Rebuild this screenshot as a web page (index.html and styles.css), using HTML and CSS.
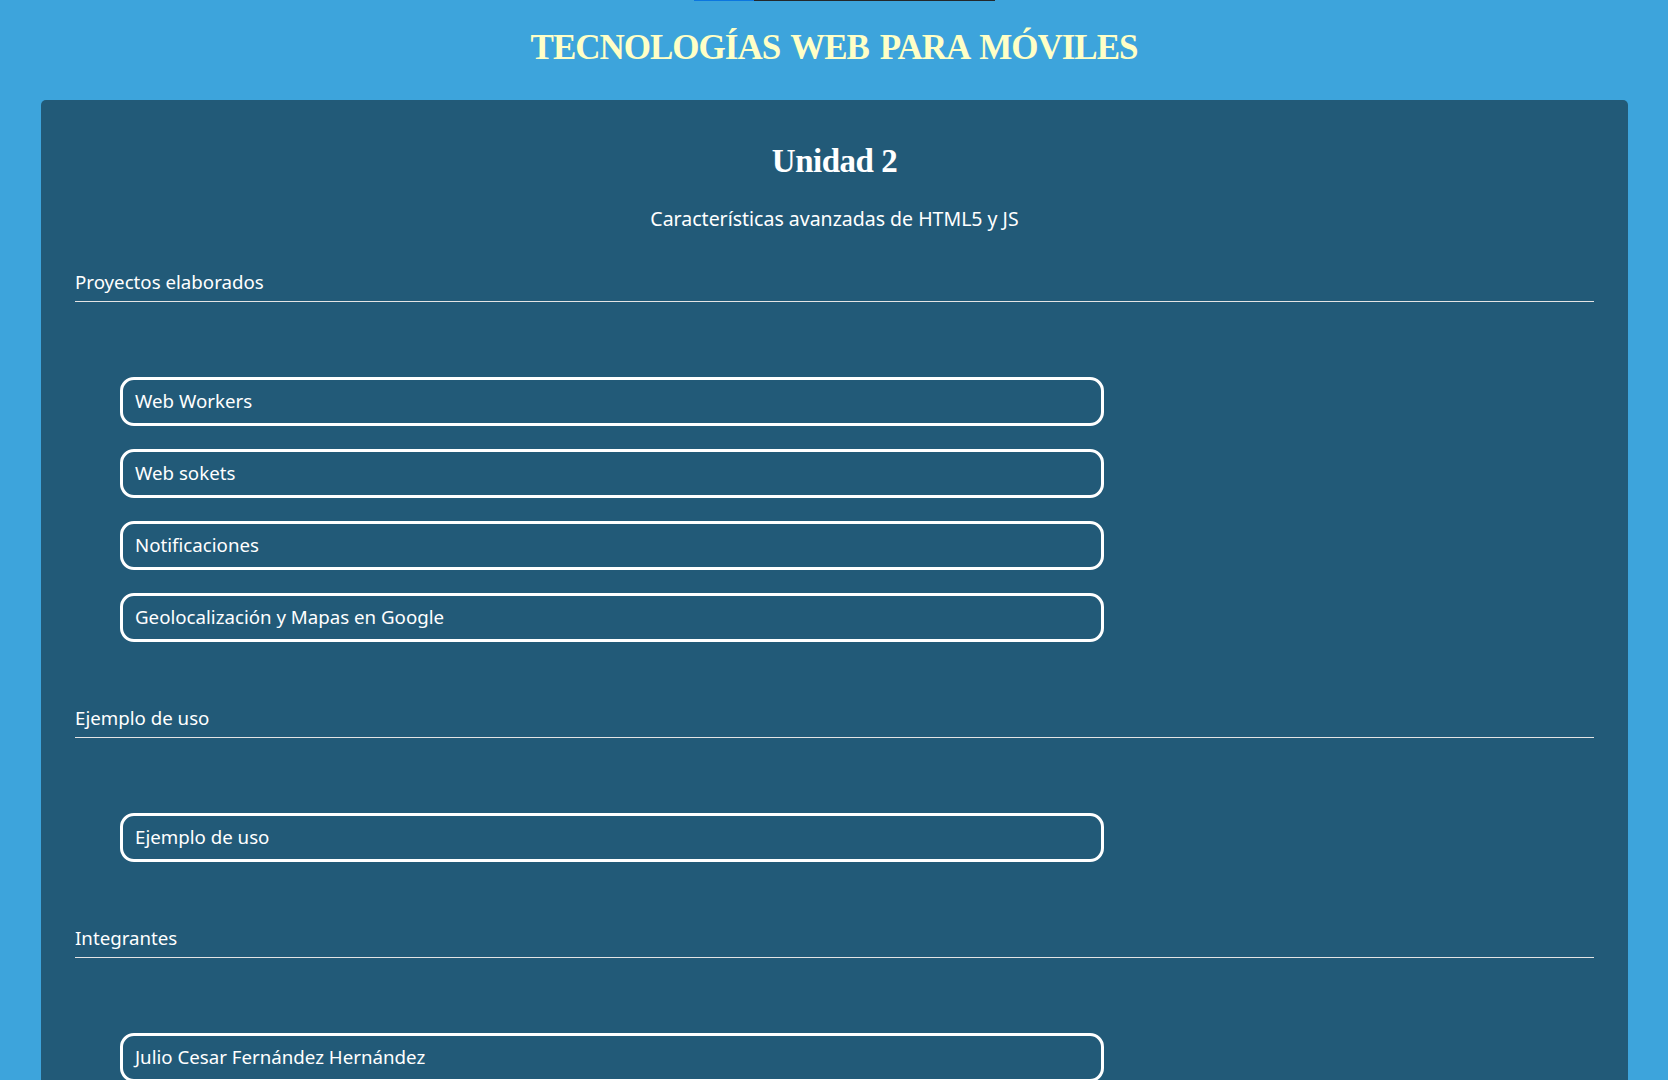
FILE: index.html
```html
<!DOCTYPE html>
<html lang="es">
<head>
<meta charset="utf-8">
<title>Tecnologías Web para Móviles - Unidad 2</title>
<link rel="stylesheet" href="styles.css">
</head>
<body>
<div class="topbar"><span class="topbar-blue"></span><span class="topbar-dark"></span></div>
<h1 class="site-title">TECNOLOGÍAS WEB PARA MÓVILES</h1>
<main class="card">
  <h2 class="unit-title">Unidad 2</h2>
  <p class="unit-subtitle">Características avanzadas de HTML5 y JS</p>

  <section class="section">
    <h3 class="section-title">Proyectos elaborados</h3>
    <ul class="link-list">
      <li class="link-item">Web Workers</li>
      <li class="link-item">Web sokets</li>
      <li class="link-item">Notificaciones</li>
      <li class="link-item">Geolocalización y Mapas en Google</li>
    </ul>
  </section>

  <section class="section">
    <h3 class="section-title">Ejemplo de uso</h3>
    <ul class="link-list">
      <li class="link-item">Ejemplo de uso</li>
    </ul>
  </section>

  <section class="section">
    <h3 class="section-title">Integrantes</h3>
    <ul class="link-list">
      <li class="link-item">Julio Cesar Fernández Hernández</li>
    </ul>
  </section>
</main>
</body>
</html>
```
FILE: styles.css
```css
body {
  margin: 0;
  background: #3da4dc;
  color: #ffffff;
  font-family: "Noto Sans", "Open Sans", sans-serif;
}

.topbar {
  display: flex;
  height: 1px;
  padding-left: 694px;
}

.topbar-blue {
  width: 60px;
  background: #0b76e0;
}

.topbar-dark {
  width: 241px;
  background: #23282c;
}

.site-title {
  margin: 27px 0 32px;
  text-align: center;
  font-family: "Liberation Serif", serif;
  font-weight: bold;
  font-size: 35px;
  line-height: 40px;
  letter-spacing: -1px;
  word-spacing: 3px;
  color: #ffffc6;
}

.card {
  margin: 0 40px 0 41px;
  background: #225a78;
  border-radius: 5px;
  padding: 41px 34px 60px;
}

.unit-title {
  margin: 0 0 26px;
  text-align: center;
  font-family: "Liberation Serif", serif;
  font-weight: bold;
  font-size: 33px;
  line-height: 40px;
  letter-spacing: -0.5px;
}

.unit-subtitle {
  margin: 0 0 39px;
  text-align: center;
  font-size: 19.5px;
  line-height: 24px;
}

.section + .section {
  margin-top: 64px;
}

.section-title {
  margin: 0;
  font-weight: 400;
  font-size: 18.7px;
  line-height: 24px;
  padding-bottom: 7px;
  border-bottom: 1px solid #e4e4e4;
}

.link-list {
  list-style: none;
  margin: 75px 0 0 45px;
  padding: 0;
  display: flex;
  flex-direction: column;
  gap: 23px;
}

.link-item {
  width: 984px;
  box-sizing: border-box;
  border: 3px solid #ffffff;
  border-radius: 14px;
  padding: 9px 12px 10px;
  font-size: 18.7px;
  line-height: 24px;
}
```
